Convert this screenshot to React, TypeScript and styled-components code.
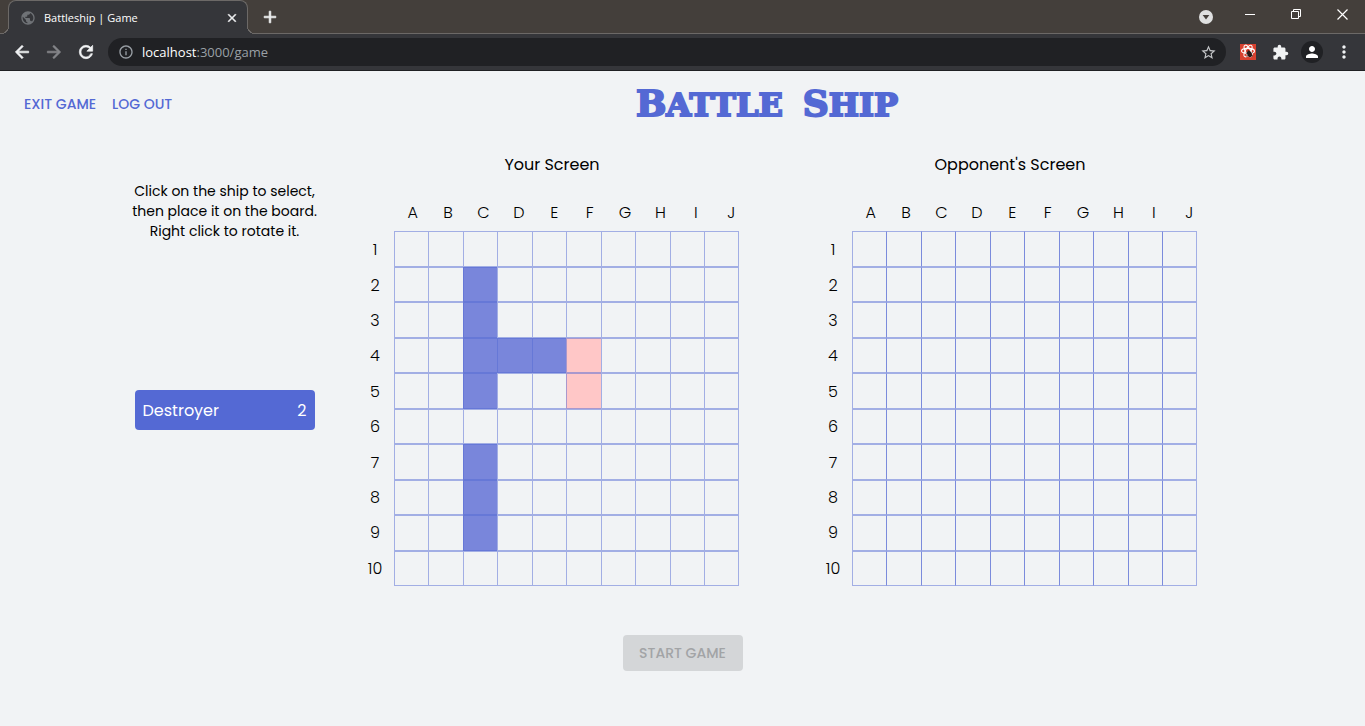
import React from 'react';
import styled, { createGlobalStyle } from 'styled-components';
import {
  MdAdd,
  MdArrowBack,
  MdArrowForward,
  MdClose,
  MdExtension,
  MdInfoOutline,
  MdMoreVert,
  MdPerson,
  MdPublic,
  MdRefresh,
  MdStarBorder,
} from 'react-icons/md';

const indigo = '#5469d4';
const line = 'rgba(84, 105, 212, 0.5)';
const lineStrong = 'rgba(84, 105, 212, 0.75)';

const GlobalStyle = createGlobalStyle`
  *, *::before, *::after { box-sizing: border-box; }
  body {
    margin: 0;
    background: #f1f3f5;
    color: #000;
    font-family: Poppins, Inter, "Liberation Sans", sans-serif;
  }
  button, input { font: inherit; }
`;

/* ---------- browser window ---------- */

const Chrome = styled.div`
  font-family: "Segoe UI", "Open Sans", sans-serif;
  color: #fff;
  background: #35363a;
  border-bottom: 1px solid #1f2023;
`;

const TabStrip = styled.div`
  display: flex;
  height: 34px;
  padding-left: 8px;
  background: #443f3b;
  box-shadow: inset 0 -1px #6c6967;
`;

const Tab = styled.div`
  position: relative;
  display: flex;
  align-items: center;
  gap: 8px;
  width: 240px;
  padding: 0 7px 0 11px;
  font-size: 11px;
  background: #35363a;
  border: 1px solid #6c6967;
  border-width: 1px 1px 0;
  border-radius: 8px 8px 0 0;

  span {
    flex: 1;
  }

  /* outward curves that join the tab to the toolbar */
  &::before,
  &::after {
    content: '';
    position: absolute;
    bottom: 0;
    width: 8px;
    height: 8px;
  }
  &::before {
    left: -8px;
    background: radial-gradient(circle at 0 0, #443f3b 7px, #6c6967 7px 8px, #35363a 8px);
  }
  &::after {
    right: -8px;
    background: radial-gradient(circle at 100% 0, #443f3b 7px, #6c6967 7px 8px, #35363a 8px);
  }
`;

const IconButton = styled.button<{ $size?: number; $tone?: string }>`
  display: grid;
  place-items: center;
  flex: none;
  width: ${({ $size = 32 }) => $size}px;
  height: ${({ $size = 32 }) => $size}px;
  padding: 0;
  border: 0;
  background: none;
  color: ${({ $tone = '#f1f3f4' }) => $tone};
`;

const BoldIconButton = styled(IconButton)`
  path:not([fill='none']) {
    stroke-width: 0.8px;
  }
`;

const NewTabButton = styled(BoldIconButton)`
  width: 44px;
  height: 34px;
`;

const WindowControls = styled.div`
  display: flex;
  margin-left: auto;
  height: 28px;
`;

const WindowButton = styled(IconButton)`
  width: 46px;
  height: 28px;
`;

const TabSearch = styled(WindowButton)`
  width: 42px;
  height: 34px;
`;

const Toolbar = styled.div`
  display: flex;
  align-items: center;
  height: 36px;
  padding: 0 5px 0 6px;
`;

const Address = styled.div`
  display: flex;
  flex: 1;
  align-items: center;
  gap: 8px;
  height: 28px;
  margin: 0 6px;
  padding: 0 2px 0 10px;
  border-radius: 14px;
  background: #202124;
  color: #9aa0a6;
  font-size: 13px;
`;

const Url = styled.div`
  flex: 1;

  b {
    font-weight: 400;
    color: #fff;
  }
`;

const Avatar = styled.span`
  display: grid;
  place-items: center;
  width: 22px;
  height: 22px;
  border-radius: 50%;
  background: #202124;
`;

function DevtoolsIcon() {
  return (
    <svg width="16" height="16" viewBox="0 0 16 16" fill="none">
      <rect width="16" height="16" fill="#d8412f" />
      <g stroke="#fff" strokeWidth="1.1">
        <ellipse cx="8" cy="7" rx="6.5" ry="2.6" />
        <ellipse cx="8" cy="7" rx="6.5" ry="2.6" transform="rotate(60 8 7)" />
        <ellipse cx="8" cy="7" rx="6.5" ry="2.6" transform="rotate(120 8 7)" />
      </g>
      <ellipse cx="9.5" cy="10" rx="2.2" ry="3.2" fill="#2b1a18" transform="rotate(-25 9.5 10)" />
      <path d="M6 9l7 3M6.5 12.5l6-4M8 6l3 7" stroke="#2b1a18" strokeWidth=".8" />
    </svg>
  );
}

function BrowserChrome() {
  return (
    <Chrome>
      <TabStrip>
        <Tab>
          <MdPublic size={16} color="#6f7276" />
          <span>Battleship | Game</span>
          <BoldIconButton $size={16} aria-label="Close tab">
            <MdClose size={14} />
          </BoldIconButton>
        </Tab>
        <NewTabButton aria-label="New tab">
          <MdAdd size={20} />
        </NewTabButton>
        <WindowControls>
          <TabSearch aria-label="Search tabs">
            <svg width="14" height="14" viewBox="0 0 14 14">
              <circle cx="7" cy="7" r="7" fill="#dfe0e0" />
              <path d="M3.6 5h6.8L7 9.4z" fill="#443f3b" />
            </svg>
          </TabSearch>
          <WindowButton aria-label="Minimise">
            <svg width="10" height="10" viewBox="0 0 10 10">
              <path d="M0 5.5h10" stroke="#fff" />
            </svg>
          </WindowButton>
          <WindowButton aria-label="Restore">
            <svg width="10" height="10" viewBox="0 0 10 10" fill="none" stroke="#fff">
              <path d="M.5 2.5h7v7h-7zM2.5 2.5v-2h7v7h-2" />
            </svg>
          </WindowButton>
          <WindowButton aria-label="Close">
            <svg width="11" height="11" viewBox="0 0 11 11">
              <path d="M.5 .5l10 10M10.5 .5l-10 10" stroke="#fff" strokeWidth="1.2" />
            </svg>
          </WindowButton>
        </WindowControls>
      </TabStrip>
      <Toolbar>
        <BoldIconButton aria-label="Back">
          <MdArrowBack size={20} />
        </BoldIconButton>
        <BoldIconButton $tone="#85868a" aria-label="Forward">
          <MdArrowForward size={20} />
        </BoldIconButton>
        <BoldIconButton aria-label="Reload">
          <MdRefresh size={20} />
        </BoldIconButton>
        <Address>
          <MdInfoOutline size={16} />
          <Url>
            <b>localhost</b>:3000/game
          </Url>
          <IconButton $tone="#c6c8ca" aria-label="Bookmark">
            <MdStarBorder size={17} />
          </IconButton>
        </Address>
        <IconButton aria-label="React developer tools">
          <DevtoolsIcon />
        </IconButton>
        <IconButton aria-label="Extensions">
          <MdExtension size={17} />
        </IconButton>
        <IconButton aria-label="Profile">
          <Avatar>
            <MdPerson size={18} color="#fff" />
          </Avatar>
        </IconButton>
        <IconButton aria-label="Menu">
          <MdMoreVert size={20} />
        </IconButton>
      </Toolbar>
    </Chrome>
  );
}

/* ---------- game page ---------- */

const Header = styled.header`
  display: flex;
  align-items: center;
  height: 66px;
  padding: 0 24px;
`;

const Nav = styled.nav`
  display: flex;
  flex: none;
  gap: 16px;
  width: 169px;
`;

const NavLink = styled.a`
  color: ${indigo};
  font-size: 14px;
  font-weight: 500;
  line-height: 24px;
  text-decoration: none;
  white-space: nowrap;
`;

const Logo = styled.h1`
  display: flex;
  flex: 1;
  align-items: center;
  justify-content: center;
  gap: 20px;
  margin: 0;
  color: ${indigo};
  font-family: "DejaVu Serif", serif;
  font-size: 32px;
  font-weight: 700;
  line-height: 40px;
  text-transform: uppercase;
  white-space: nowrap;
  -webkit-text-stroke: 2px ${indigo};
`;

const LogoWord = styled.span`
  display: inline-block;

  &::first-letter {
    font-size: 36px;
  }
`;

const Game = styled.main`
  display: grid;
  grid-template-columns: minmax(190px, 197fr) minmax(394px, 458fr) minmax(394px, 458fr);
  padding: 14px 126px 0;
`;

const Harbour = styled.aside`
  display: flex;
  flex-direction: column;
  align-items: center;
  padding-top: 30px;
`;

const Hint = styled.p`
  margin: 0;
  font-size: 14px;
  line-height: 20px;
  text-align: center;
  white-space: pre-line;
`;

const ShipButton = styled.button`
  display: flex;
  align-items: center;
  justify-content: space-between;
  width: 180px;
  height: 40px;
  margin-top: 149px;
  padding: 0 8px;
  border: 0;
  border-radius: 4px;
  background: ${indigo};
  color: #fff;
  font-size: 16px;
`;

const BoardSection = styled.section`
  justify-self: center;
  display: grid;
  grid-template-columns: 39px 355px;
`;

const BoardTitle = styled.h2`
  grid-column: 1 / -1;
  margin: 0 0 24px;
  font-size: 16px;
  font-weight: 400;
  line-height: 28px;
  text-align: center;
`;

const ColumnLabels = styled.div`
  grid-column: 2;
  display: grid;
  grid-template-columns: repeat(10, 1fr);
  height: 28px;
  padding-left: 1px;
  line-height: 20px;
  text-align: center;
  font-weight: 300;
`;

const RowLabels = styled.div`
  display: grid;
  grid-template-rows: repeat(10, 1fr);
  place-items: center;
  padding: 1px 0 0 1px;
  font-weight: 300;
`;

const Board = styled.div`
  display: grid;
  grid-template-columns: repeat(5, 34px 35px);
  grid-template-rows: repeat(10, 1fr);
  height: 355px;
`;

const cellFill = { empty: 'transparent', ship: '#7986db', target: '#ffc7c7' };
type CellState = keyof typeof cellFill;

const Cell = styled.button<{ $state: CellState; $strong: boolean }>`
  min-width: 0;
  padding: 0;
  border: 1px solid ${line};
  border-right-width: 0;
  border-radius: 0;
  background: ${({ $state }) => cellFill[$state]};

  &:not(:nth-child(10n + 1)) {
    border-left-color: ${({ $strong }) => ($strong ? lineStrong : line)};
  }
  &:nth-child(10n) {
    border-right-width: 1px;
  }
`;

const Actions = styled.div`
  display: flex;
  justify-content: center;
  padding: 49px 0 55px;
`;

const StartButton = styled.button`
  width: 120px;
  height: 36px;
  padding: 0;
  border: 0;
  border-radius: 4px;
  background: #d4d6d8;
  color: #a2a4a6;
  font-size: 14px;
  font-weight: 500;
  white-space: nowrap;
`;

const columns = 'ABCDEFGHIJ'.split('');
const rows = Array.from({ length: 10 }, (_, i) => i + 1);
const ships = ['C2', 'C3', 'C4', 'C5', 'D4', 'E4', 'C7', 'C8', 'C9'];
const targets = ['F4', 'F5'];

function stateOf(id: string, own: boolean): CellState {
  if (!own) return 'empty';
  if (ships.includes(id)) return 'ship';
  return targets.includes(id) ? 'target' : 'empty';
}

function PlayerBoard({ title, own = false }: { title: string; own?: boolean }) {
  return (
    <BoardSection aria-label={title}>
      <BoardTitle>{title}</BoardTitle>
      <ColumnLabels>
        {columns.map((c) => (
          <span key={c}>{c}</span>
        ))}
      </ColumnLabels>
      <RowLabels>
        {rows.map((r) => (
          <span key={r}>{r}</span>
        ))}
      </RowLabels>
      <Board>
        {rows.flatMap((r) =>
          columns.map((c) => (
            <Cell key={c + r} aria-label={c + r} $state={stateOf(c + r, own)} $strong={!own} />
          )),
        )}
      </Board>
    </BoardSection>
  );
}

export default function App() {
  return (
    <>
      <GlobalStyle />
      <BrowserChrome />
      <Header>
        <Nav>
          <NavLink href="#exit">EXIT GAME</NavLink>
          <NavLink href="#logout">LOG OUT</NavLink>
        </Nav>
        <Logo>
          <LogoWord>Battle</LogoWord> <LogoWord>Ship</LogoWord>
        </Logo>
      </Header>
      <Game>
        <Harbour>
          <Hint>{'Click on the ship to select,\nthen place it on the board.\nRight click to rotate it.'}</Hint>
          <ShipButton>
            <span>Destroyer</span>
            <span>2</span>
          </ShipButton>
        </Harbour>
        <PlayerBoard title="Your Screen" own />
        <PlayerBoard title="Opponent's Screen" />
      </Game>
      <Actions>
        <StartButton disabled>START GAME</StartButton>
      </Actions>
    </>
  );
}
